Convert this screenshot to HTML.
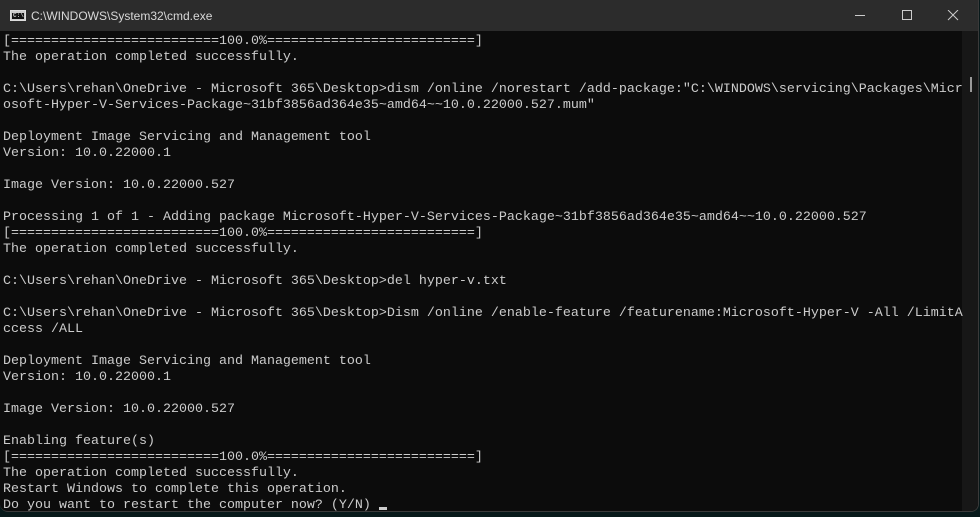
<!DOCTYPE html>
<html><head><meta charset="utf-8"><style>
html,body{margin:0;padding:0;width:980px;height:517px;overflow:hidden;background:#07191a;}
.win{position:absolute;left:0;top:0;width:979px;height:512px;background:#0c0c0c;border-radius:0 0 8px 8px;overflow:hidden;border-right:1px solid #3a3a3a;border-bottom:1px solid #3a3a3a;box-sizing:border-box}
.title{position:absolute;left:0;top:0;right:0;height:31px;background:#2c2c2c;color:#ffffff;font:12px "Liberation Sans",sans-serif;}
.title .t{position:absolute;left:31px;top:9px;color:#d8d8d8}
.ico{position:absolute;left:10px;top:10px;width:16px;height:11px;background:#ccc;border:1px solid #ddd;box-sizing:border-box}
.ico::after{content:"";position:absolute;left:1px;top:2px;right:1px;bottom:1px;background:#111}
.ico span{position:absolute;left:2px;top:2px;font:bold 6px "Liberation Mono",monospace;color:#ccc;z-index:2;line-height:6px}
.sb{position:absolute;left:962px;top:31px;width:17px;bottom:0;background:#171717}
.thumb{position:absolute;left:970px;top:77px;width:2px;height:15px;background:#9a9a9a}
pre{position:absolute;left:3px;top:34px;margin:0;font:13.33px/16px "Liberation Mono",monospace;color:#cccccc;white-space:pre}
.cur{display:inline-block;width:8px;height:3px;background:#ccc;vertical-align:-2px}
</style></head><body>
<div class="win">
<div class="title"><div class="ico"><span>C:\</span></div><div class="t">C:\WINDOWS\System32\cmd.exe</div>
<svg style="position:absolute;left:855px;top:10px" width="110" height="12"><line x1="0" y1="5.5" x2="10" y2="5.5" stroke="#ccc"/><rect x="47.5" y="0.5" width="9" height="9" fill="none" stroke="#ccc"/><path d="M93 0 L103 10 M103 0 L93 10" stroke="#ccc"/></svg>
</div>
<div class="sb"></div><div class="thumb"></div>
<pre>[==========================100.0%==========================]
The operation completed successfully.

C:\Users\rehan\OneDrive - Microsoft 365\Desktop&gt;dism /online /norestart /add-package:"C:\WINDOWS\servicing\Packages\Micr
osoft-Hyper-V-Services-Package~31bf3856ad364e35~amd64~~10.0.22000.527.mum"

Deployment Image Servicing and Management tool
Version: 10.0.22000.1

Image Version: 10.0.22000.527

Processing 1 of 1 - Adding package Microsoft-Hyper-V-Services-Package~31bf3856ad364e35~amd64~~10.0.22000.527
[==========================100.0%==========================]
The operation completed successfully.

C:\Users\rehan\OneDrive - Microsoft 365\Desktop&gt;del hyper-v.txt

C:\Users\rehan\OneDrive - Microsoft 365\Desktop&gt;Dism /online /enable-feature /featurename:Microsoft-Hyper-V -All /LimitA
ccess /ALL

Deployment Image Servicing and Management tool
Version: 10.0.22000.1

Image Version: 10.0.22000.527

Enabling feature(s)
[==========================100.0%==========================]
The operation completed successfully.
Restart Windows to complete this operation.
Do you want to restart the computer now? (Y/N) <span class="cur"></span></pre>
</div>
</body></html>
